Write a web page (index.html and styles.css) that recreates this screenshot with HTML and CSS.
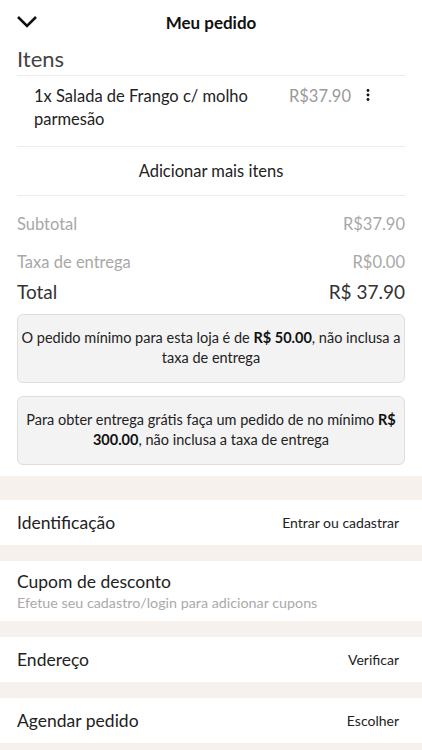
FILE: index.html
```html
<!DOCTYPE html>
<html lang="pt">

<head>
    <meta charset="UTF-8">
    <meta name="viewport" content="width=device-width, initial-scale=1.0">
    <title>Meu pedido</title>
    <link rel="stylesheet" href="styles.css">
</head>

<body>
    <header class="topbar">
        <span class="back">
            <svg width="22" height="14" viewBox="0 0 22 14">
                <path d="M2 2 L11 11 L20 2" fill="none" stroke="#111" stroke-width="2.6" />
            </svg>
        </span>
        <h1>Meu pedido</h1>
    </header>

    <section class="cart">
        <h2 class="section-title">Itens</h2>

        <div class="item">
            <div class="item-name">1x Salada de Frango c/ molho parmesão</div>
            <div class="item-price">R$37.90</div>
            <span class="item-menu">
                <svg width="4" height="12" viewBox="0 0 4 12">
                    <circle cx="2" cy="1.5" r="1.4" fill="#111" />
                    <circle cx="2" cy="6" r="1.4" fill="#111" />
                    <circle cx="2" cy="10.5" r="1.4" fill="#111" />
                </svg>
            </span>
        </div>

        <div class="add-more">Adicionar mais itens</div>

        <div class="summary">
            <div class="line muted"><span>Subtotal</span><span>R$37.90</span></div>
            <div class="line muted"><span>Taxa de entrega</span><span>R$0.00</span></div>
            <div class="line total"><span>Total</span><span>R$ 37.90</span></div>
        </div>

        <p class="notice">O pedido mínimo para esta loja é de <b>R$ 50.00</b>, não inclusa a taxa de entrega</p>
        <p class="notice">Para obter entrega grátis faça um pedido de no mínimo <b>R$ 300.00</b>, não inclusa a taxa de entrega</p>
    </section>

    <div class="options">
        <div class="option">
            <span class="option-label">Identificação</span>
            <span class="option-action">Entrar ou cadastrar</span>
        </div>
        <div class="option coupon">
            <span class="option-label">Cupom de desconto</span>
            <span class="option-hint">Efetue seu cadastro/login para adicionar cupons</span>
        </div>
        <div class="option">
            <span class="option-label">Endereço</span>
            <span class="option-action">Verificar</span>
        </div>
        <div class="option">
            <span class="option-label">Agendar pedido</span>
            <span class="option-action">Escolher</span>
        </div>
    </div>
</body>

</html>
```

FILE: styles.css
```css
body {
    font-family: Lato, "Open Sans", sans-serif;
    margin: 0;
    padding: 0;
    background: #fff;
    color: #222;
    width: 422px;
    height: 750px;
    overflow: hidden;
}

.topbar {
    position: relative;
    height: 44px;
    display: flex;
    align-items: center;
    justify-content: center;
}

.topbar h1 {
    margin: 0;
    font-size: 17px;
    font-weight: 700;
    color: #111;
}

.back {
    position: absolute;
    left: 16px;
    top: 15px;
    line-height: 0;
}

.cart {
    padding: 0 17px;
}

.section-title {
    margin: 0;
    font-size: 22px;
    font-weight: 400;
    color: #444;
    line-height: 30px;
    padding-bottom: 1px;
    border-bottom: 1px solid #ececec;
}

.item {
    display: flex;
    align-items: flex-start;
    padding: 9px 0 15px 17px;
    border-bottom: 1px solid #ececec;
}

.item-name {
    flex: 1;
    font-size: 16.5px;
    line-height: 23px;
    color: #222;
    padding-right: 16px;
}

.item-price {
    font-size: 16.5px;
    line-height: 23px;
    color: #999;
}

.item-menu {
    width: 54px;
    padding-left: 15px;
    padding-top: 4px;
    line-height: 0;
    box-sizing: border-box;
}

.add-more {
    text-align: center;
    font-size: 16.5px;
    line-height: 48px;
    color: #222;
    border-bottom: 1px solid #ececec;
}

.summary {
    padding-top: 17px;
}

.line {
    display: flex;
    justify-content: space-between;
    font-size: 16.5px;
    line-height: 22px;
    margin-bottom: 16px;
}

.line.muted {
    color: #a8a8a8;
}

.line.total {
    font-size: 19px;
    color: #333;
    margin-top: -8px;
    margin-bottom: 11px;
}

.notice {
    margin: 0 0 13px;
    background: #f3f3f3;
    border: 1px solid #dedede;
    border-radius: 6px;
    text-align: center;
    font-size: 14.5px;
    line-height: 20px;
    color: #222;
    padding: 13px 0 14px;
}

.notice:last-child {
    margin-bottom: 11px;
}

.notice b {
    font-weight: 700;
    color: #111;
}

.options {
    background: #f7f1ee;
    padding: 24px 0 8px;
    display: flex;
    flex-direction: column;
    gap: 16px;
}

.option {
    background: #fff;
    display: flex;
    justify-content: space-between;
    align-items: center;
    height: 45px;
    padding: 0 23px 0 17px;
}

.option-label {
    font-size: 17.5px;
    color: #222;
}

.option-action {
    font-size: 14px;
    color: #222;
}

.option.coupon {
    flex-direction: column;
    align-items: flex-start;
    justify-content: center;
    height: 60px;
    gap: 2px;
}

.option-hint {
    font-size: 14.3px;
    color: #aaa;
}
```
